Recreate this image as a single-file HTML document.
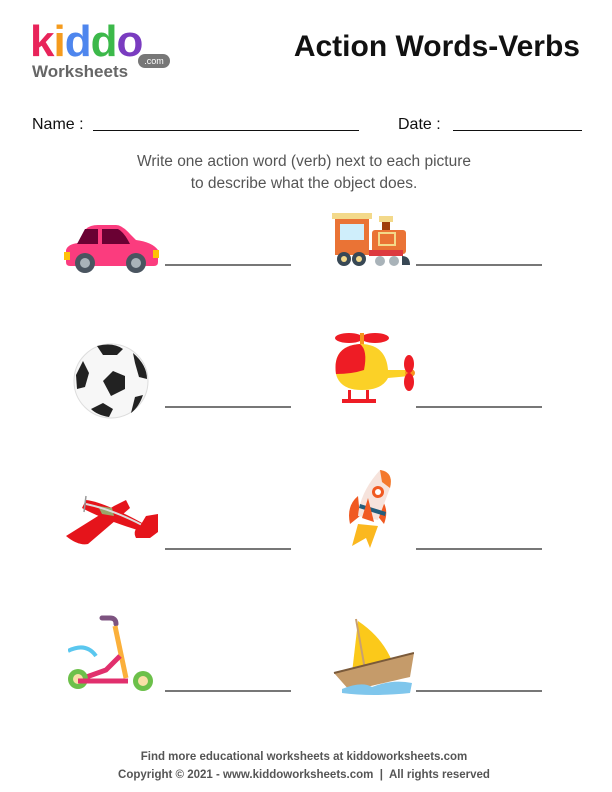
<!DOCTYPE html>
<html><head><meta charset="utf-8"><style>
body{margin:0;width:612px;height:792px;background:#fff;position:relative;font-family:"Liberation Sans",sans-serif;overflow:hidden}
.a{position:absolute}
.ln{position:absolute;height:1.5px;background:#777;width:126px}
</style></head><body>
<div class="a" style="left:30px;top:20px;font-size:44px;font-weight:bold;letter-spacing:-1px;line-height:44px">
<span style="color:#e8245a">k</span><span style="color:#f59b1d">i</span><span style="color:#4e86ee">d</span><span style="color:#3cb94a">d</span><span style="color:#7a3cc0">o</span></div>
<div class="a" style="left:32px;top:62px;font-size:17px;font-weight:bold;color:#666">Worksheets</div>
<div class="a" style="left:138px;top:54px;width:32px;height:14px;border-radius:8px;background:#777;color:#fff;font-size:9px;text-align:center;line-height:14px">.com</div>
<div class="a" style="right:32px;top:30px;font-size:30px;font-weight:bold;color:#111">Action Words-Verbs</div>
<div class="a" style="left:32px;top:116px;font-size:16px;color:#111">Name :</div>
<div class="a" style="left:93px;top:130px;width:266px;height:1px;background:#111"></div>
<div class="a" style="left:398px;top:116px;font-size:16px;color:#111">Date :</div>
<div class="a" style="left:453px;top:130px;width:129px;height:1px;background:#111"></div>
<div class="a" style="left:0;width:608px;top:151px;text-align:center;font-size:15.5px;color:#555;line-height:22px">Write one action word (verb) next to each picture<br>to describe what the object does.</div>

<div class="ln" style="left:165px;top:264px"></div><div class="ln" style="left:416px;top:264px"></div>
<div class="ln" style="left:165px;top:406px"></div><div class="ln" style="left:416px;top:406px"></div>
<div class="ln" style="left:165px;top:548px"></div><div class="ln" style="left:416px;top:548px"></div>
<div class="ln" style="left:165px;top:690px"></div><div class="ln" style="left:416px;top:690px"></div>

<!-- car -->
<svg class="a" style="left:64px;top:224px" width="96" height="50"><path d="M2 26 Q4 20 14 19 L22 5 Q26 1 34 1 L52 1 Q58 1 66 10 L72 16 Q88 18 94 26 L94 38 Q94 42 90 42 L6 42 Q2 42 2 38Z" fill="#fb3c7e"/><path d="M13 20 L21 5 L34 5 L34 20Z M38 5 L54 5 Q60 8 66 20 L38 20Z" fill="#6a0133"/><circle cx="21" cy="39" r="10" fill="#4a5560"/><circle cx="21" cy="39" r="5" fill="#a9b3b9"/><circle cx="72" cy="39" r="10" fill="#4a5560"/><circle cx="72" cy="39" r="5" fill="#a9b3b9"/><rect x="0" y="28" width="6" height="8" fill="#ffc107"/><rect x="89" y="26" width="6" height="8" fill="#ffc107"/></svg>
<!-- train -->
<svg class="a" style="left:332px;top:212px" width="84" height="56"><rect x="0" y="1" width="40" height="6" fill="#f3d98a"/><rect x="3" y="7" width="34" height="36" fill="#ea7335"/><rect x="8" y="12" width="24" height="16" fill="#cfeefb"/><rect x="47" y="4" width="14" height="6" fill="#f3d98a"/><rect x="50" y="10" width="8" height="8" fill="#a03d0b"/><rect x="40" y="18" width="34" height="24" rx="3" fill="#ea7335"/><rect x="46" y="20" width="18" height="14" fill="#f3d98a"/><rect x="48" y="22" width="14" height="10" fill="#ea7335"/><rect x="37" y="38" width="34" height="6" fill="#dd3a40"/><circle cx="12" cy="47" r="7" fill="#384855"/><circle cx="27" cy="47" r="7" fill="#384855"/><circle cx="12" cy="47" r="3" fill="#f3d98a"/><circle cx="27" cy="47" r="3" fill="#f3d98a"/><circle cx="48" cy="49" r="5" fill="#a9b3b9"/><circle cx="62" cy="49" r="5" fill="#a9b3b9"/><path d="M70 53 L70 44 Q78 44 78 53Z" fill="#384855"/></svg>
<!-- ball -->
<svg class="a" style="left:73px;top:343px" width="78" height="76"><circle cx="38" cy="38" r="37" fill="#f7f7f7" stroke="#ddd"/><path d="M38 53 L52 46 L52 33 L40 28 L30 38Z" fill="#222"/><path d="M24 3 Q40 -1 50 6 L44 12 L30 12Z" fill="#222"/><path d="M3 32 L10 18 L16 30 L12 44 L4 46Z" fill="#222"/><path d="M60 10 Q74 22 74 36 L66 34 L62 20Z" fill="#222"/><path d="M18 66 L30 60 L40 66 L36 74 Q24 72 18 66Z" fill="#222"/><path d="M62 54 L70 52 Q66 64 58 70Z" fill="#222"/></svg>
<!-- heli -->
<svg class="a" style="left:332px;top:330px" width="84" height="76"><ellipse cx="17" cy="8" rx="14" ry="5" fill="#ee1c25"/><ellipse cx="43" cy="8" rx="14" ry="5" fill="#ee1c25"/><rect x="28" y="3" width="4" height="13" fill="#f7931e"/><path d="M4 44 Q0 16 28 14 Q54 14 56 40 L78 40 L78 46 L56 48 Q50 60 30 60 Q8 60 4 44Z" fill="#fbd127"/><path d="M4 44 Q0 16 28 14 Q36 20 32 40 Q20 44 4 44Z" fill="#ee1c25"/><ellipse cx="78" cy="43" rx="5" ry="4" fill="#f7931e"/><ellipse cx="77" cy="34" rx="5" ry="9" fill="#ee1c25"/><ellipse cx="77" cy="52" rx="5" ry="9" fill="#ee1c25"/><rect x="16" y="60" width="3" height="10" fill="#ee1c25"/><rect x="34" y="60" width="3" height="10" fill="#ee1c25"/><rect x="10" y="69" width="34" height="4" fill="#ee1c25"/></svg>
<!-- plane -->
<svg class="a" style="left:64px;top:486px" width="96" height="60"><path d="M2 50 L50 20 L62 14 L66 22 L24 58 Q14 60 2 50Z" fill="#e5141b"/><path d="M22 14 Q40 16 80 38 L86 44 L80 46 Q40 34 18 22Z" fill="#e5141b"/><path d="M34 20 L48 22 L50 30 L38 28Z" fill="#9aa86a"/><path d="M22 18 Q50 24 80 40" stroke="#ddd" stroke-width="2" fill="none"/><path d="M82 30 L94 28 L94 46 L86 52 L72 52 Q68 44 76 40Z" fill="#e5141b"/><line x1="22" y1="10" x2="20" y2="26" stroke="#999" stroke-width="1.5"/></svg>
<!-- rocket -->
<svg class="a" style="left:344px;top:468px" width="54" height="82"><path d="M14 56 L8 78 L22 70 L26 80 L34 58Z" fill="#fbb81f"/><path d="M14 28 Q2 38 6 56 L16 48Z M36 30 Q46 40 40 56 L32 46Z" fill="#f05a22"/><path d="M36 2 Q50 4 46 20 L34 52 L14 48 Q16 24 36 2Z" fill="#f6e3dc"/><path d="M36 2 Q50 4 46 20 L38 14Z" fill="#f4792c"/><circle cx="34" cy="24" r="6" fill="#f05a22"/><circle cx="34" cy="24" r="3" fill="#fff"/><path d="M16 36 L42 44 L41 48 L15 40Z" fill="#235d7c"/><path d="M18 50 L24 30 L30 54 Z" fill="#f05a22"/></svg>
<!-- scooter -->
<svg class="a" style="left:68px;top:614px" width="88" height="80"><path d="M34 4 L42 4 Q48 4 48 10" stroke="#7d5380" stroke-width="5" fill="none" stroke-linecap="round"/><path d="M47 12 L58 64" stroke="#fbb03b" stroke-width="5"/><path d="M52 42 Q44 50 38 56 L10 66" stroke="#e12f6d" stroke-width="5" fill="none"/><path d="M0 37 Q18 28 28 42" stroke="#5ac7ef" stroke-width="4" fill="none"/><circle cx="10" cy="65" r="10" fill="#6cc04a"/><circle cx="10" cy="65" r="5" fill="#f9e0a7"/><circle cx="75" cy="67" r="10" fill="#6cc04a"/><circle cx="75" cy="67" r="5" fill="#f9e0a7"/><path d="M10 67 L60 67" stroke="#e12f6d" stroke-width="5"/></svg>
<!-- boat -->
<svg class="a" style="left:332px;top:617px" width="82" height="80"><path d="M26 4 L20 56 L60 44 Q50 20 26 4Z" fill="#fbc91a"/><line x1="24" y1="2" x2="34" y2="58" stroke="#c9a070" stroke-width="2"/><path d="M2 56 L82 36 L78 60 Q60 64 18 74Z" fill="#c59b6a"/><path d="M2 56 L82 36" stroke="#7a5a3a" stroke-width="2"/><path d="M10 72 Q30 64 40 70 Q60 62 80 66 L78 76 Q40 80 10 76Z" fill="#7fc6ec"/></svg>

<div class="a" style="left:0;width:608px;top:748px;text-align:center;font-size:11.5px;font-weight:bold;color:#555;line-height:18px">Find more educational worksheets at kiddoworksheets.com<br>Copyright © 2021 - www.kiddoworksheets.com &nbsp;|&nbsp; All rights reserved</div>
</body></html>
